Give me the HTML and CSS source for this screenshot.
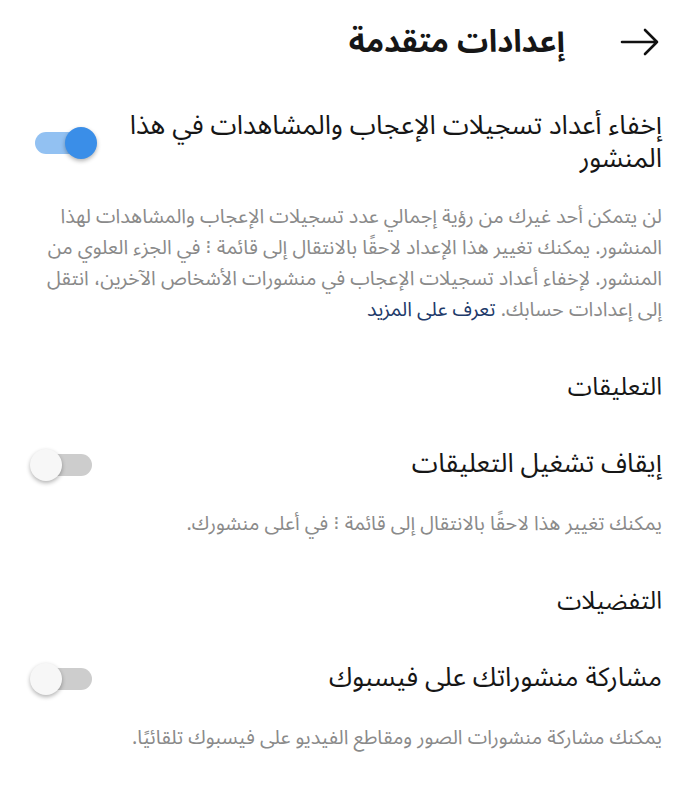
FILE: index.html
```html
<!DOCTYPE html>
<html lang="ar" dir="rtl">
<head>
    <meta charset="UTF-8">
    <meta name="viewport" content="width=device-width, initial-scale=1.0">
    <title>إعدادات متقدمة</title>
    <link rel="stylesheet" href="styles.css">
</head>
<body>
    <div class="page">
        <div class="header">
            <span class="back">
                <svg width="40" height="30" viewBox="0 0 40 30">
                    <path d="M2 15 H37 M25 3 L37 15 L25 27" fill="none" stroke="#111" stroke-width="2.6" stroke-linecap="round" stroke-linejoin="round"/>
                </svg>
            </span>
            <h1>إعدادات متقدمة</h1>
        </div>

        <div class="setting-row first">
            <div class="setting-title">إخفاء أعداد تسجيلات الإعجاب والمشاهدات في هذا المنشور</div>
            <div class="toggle on"><span class="knob"></span></div>
        </div>
        <p class="desc">لن يتمكن أحد غيرك من رؤية إجمالي عدد تسجيلات الإعجاب والمشاهدات لهذا المنشور. يمكنك تغيير هذا الإعداد لاحقًا بالانتقال إلى قائمة ⁝ في الجزء العلوي من المنشور. لإخفاء أعداد تسجيلات الإعجاب في منشورات الأشخاص الآخرين، انتقل إلى إعدادات حسابك. <a href="#">تعرف على المزيد</a></p>

        <h2 class="section">التعليقات</h2>
        <div class="setting-row">
            <div class="setting-title">إيقاف تشغيل التعليقات</div>
            <div class="toggle"><span class="knob"></span></div>
        </div>
        <p class="desc">يمكنك تغيير هذا لاحقًا بالانتقال إلى قائمة ⁝ في أعلى منشورك.</p>

        <h2 class="section">التفضيلات</h2>
        <div class="setting-row">
            <div class="setting-title">مشاركة منشوراتك على فيسبوك</div>
            <div class="toggle"><span class="knob"></span></div>
        </div>
        <p class="desc">يمكنك مشاركة منشورات الصور ومقاطع الفيديو على فيسبوك تلقائيًا.</p>
    </div>
</body>
</html>
```

FILE: styles.css
```css
body {
    margin: 0;
    padding: 0;
    background-color: #fff;
    font-family: "Noto Sans Arabic", "DejaVu Sans", sans-serif;
    color: #161616;
}
.page {
    width: 687px;
    box-sizing: border-box;
    padding: 0 25px 0 35px;
}
.header {
    display: flex;
    align-items: center;
    height: 84px;
    gap: 55px;
}
.back {
    display: flex;
    margin-right: 2px;
}
.header h1 {
    margin: 0;
    font-size: 31px;
    line-height: 40px;
    font-weight: bold;
}
.setting-row {
    display: flex;
    align-items: center;
    justify-content: space-between;
    gap: 20px;
    margin-top: 46px;
}
.setting-row.first {
    margin-top: 26px;
}
.setting-title {
    font-size: 26.5px;
    line-height: 33px;
    flex: 1;
}
.desc {
    margin: 28px 0 0;
    font-size: 19.8px;
    line-height: 31px;
    color: #8a8a8a;
}
.setting-row.first + .desc {
    margin-top: 26px;
}
.desc a {
    color: #1e3a6a;
    text-decoration: none;
}
.section {
    margin: 46px 0 0;
    font-size: 24.5px;
    line-height: 30px;
    font-weight: normal;
}
.toggle {
    position: relative;
    width: 57px;
    height: 22px;
    border-radius: 11px;
    background-color: #cdcdcd;
    flex-shrink: 0;
}
.toggle .knob {
    position: absolute;
    top: -5px;
    left: -5px;
    width: 32px;
    height: 32px;
    border-radius: 50%;
    background-color: #f7f7f7;
    box-shadow: 0 2px 4px rgba(0, 0, 0, 0.3);
}
.toggle.on {
    background-color: #92c1f2;
}
.toggle.on .knob {
    left: auto;
    right: -5px;
    background-color: #3a8ee8;
}
```
